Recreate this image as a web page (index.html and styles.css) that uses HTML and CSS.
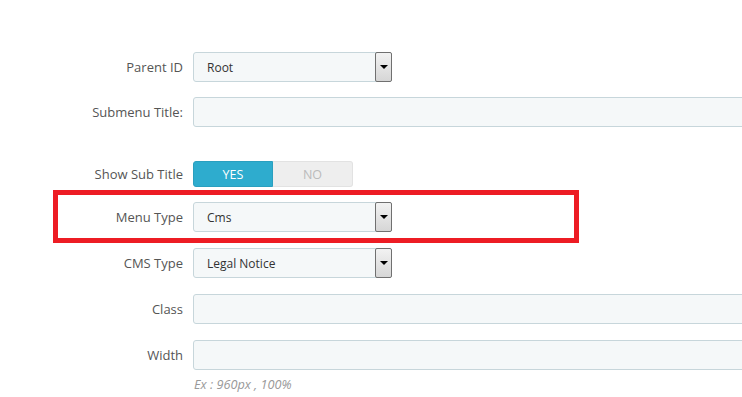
FILE: index.html
```html
<!DOCTYPE html>
<html>
<head>
<meta charset="utf-8">
<link rel="stylesheet" href="styles.css">
</head>
<body>
<div class="form">
  <div class="row">
    <label class="lbl">Parent ID</label>
    <div class="select"><span class="val">Root</span><span class="arrow"></span></div>
  </div>
  <div class="row row-gap">
    <label class="lbl">Submenu Title:</label>
    <div class="input"></div>
  </div>
  <div class="row row-toggle">
    <label class="lbl">Show Sub Title</label>
    <div class="toggle"><span class="yes">YES</span><span class="no">NO</span></div>
  </div>
  <div class="row">
    <label class="lbl">Menu Type</label>
    <div class="select"><span class="val">Cms</span><span class="arrow"></span></div>
  </div>
  <div class="row">
    <label class="lbl">CMS Type</label>
    <div class="select"><span class="val">Legal Notice</span><span class="arrow"></span></div>
  </div>
  <div class="row">
    <label class="lbl">Class</label>
    <div class="input"></div>
  </div>
  <div class="row row-last">
    <label class="lbl">Width</label>
    <div class="field">
      <div class="input"></div>
      <p class="hint">Ex : 960px , 100%</p>
    </div>
  </div>
  <div class="highlight"></div>
</div>
</body>
</html>
```
FILE: styles.css
```css
html, body {
  margin: 0;
  padding: 0;
  background: #fff;
  overflow: hidden;
}
body {
  width: 742px;
  height: 397px;
  font-family: "Open Sans", "Liberation Sans", sans-serif;
  font-size: 12px;
  color: #555;
}
.form {
  position: relative;
  padding-top: 52px;
}
.row {
  display: flex;
  align-items: flex-start;
  margin-bottom: 16px;
}
.row:first-child { margin-bottom: 15px; }
.row-gap { margin-bottom: 34px; }
.row-toggle { margin-bottom: 15px; }
.lbl {
  flex: none;
  width: 193px;
  text-align: right;
  padding-right: 10px;
  box-sizing: border-box;
  line-height: 30px;
  height: 30px;
  color: #555;
  font-size: 13px;
}
.row-toggle .lbl { line-height: 26px; height: 26px; }
.select {
  width: 199px;
  height: 30px;
  box-sizing: border-box;
  border: 1px solid #c7d6db;
  border-radius: 3px;
  background: #f5f8f9;
  display: flex;
  align-items: center;
  justify-content: space-between;
  flex: none;
}
.val {
  padding-left: 13px;
  color: #333;
  font-size: 12px;
}
.arrow {
  width: 17px;
  height: 30px;
  box-sizing: border-box;
  border: 1px solid #707070;
  border-radius: 2px;
  background: linear-gradient(#f2f2f2, #d6d6d6);
  margin-right: -1px;
  display: flex;
  align-items: center;
  justify-content: center;
}
.arrow::after {
  content: "";
  width: 0;
  height: 0;
  border-left: 4px solid transparent;
  border-right: 4px solid transparent;
  border-top: 4px solid #000;
}
.input {
  width: 600px;
  height: 30px;
  box-sizing: border-box;
  border: 1px solid #c7d6db;
  border-radius: 3px;
  background: #f5f8f9;
  flex: none;
}
.field { flex: none; }
.hint {
  margin: 7px 0 0 1px;
  font-style: italic;
  color: #999;
  font-size: 12.7px;
  line-height: 14px;
}
.toggle {
  display: flex;
  width: 160px;
  height: 26px;
  flex: none;
}
.toggle span {
  width: 80px;
  height: 26px;
  box-sizing: border-box;
  text-align: center;
  line-height: 25px;
  font-size: 12.5px;
}
.yes {
  background: #2eacce;
  color: #fff;
  border: 1px solid #2a9fbf;
  border-radius: 3px 0 0 3px;
}
.no {
  background: #eeeeee;
  color: #bbb;
  border: 1px solid #e2e2e2;
  border-left: none;
  border-radius: 0 3px 3px 0;
}
.highlight {
  position: absolute;
  left: 53px;
  top: 190px;
  width: 526px;
  height: 53px;
  box-sizing: border-box;
  border: 5px solid #ed1c24;
  pointer-events: none;
}
```
